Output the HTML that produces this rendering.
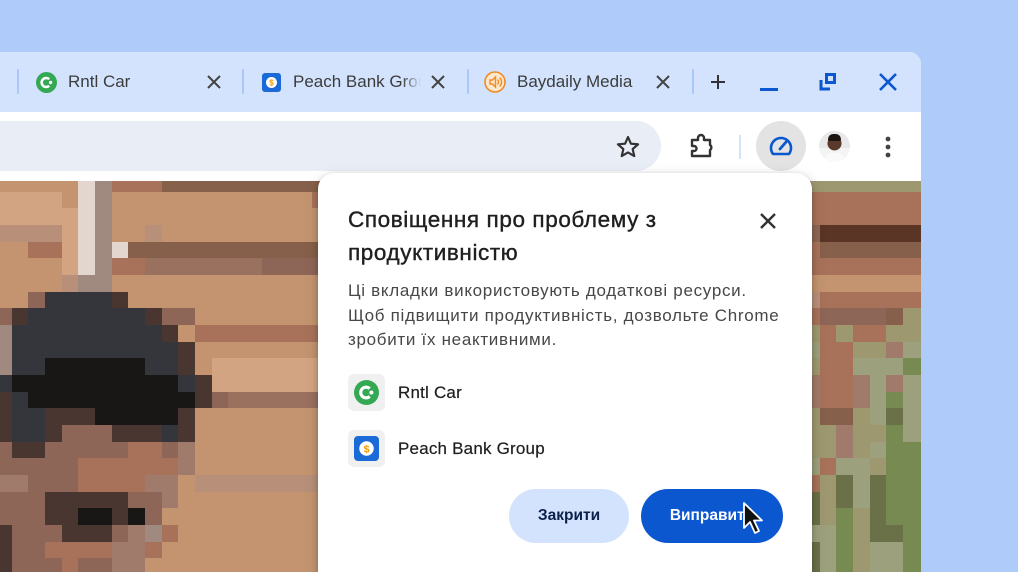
<!DOCTYPE html>
<html><head><meta charset="utf-8"><style>
*{margin:0;padding:0;box-sizing:border-box}
html,body{width:1018px;height:572px;overflow:hidden}
body{background:#afcbf9;font-family:"Liberation Sans","DejaVu Sans",sans-serif;position:relative}
.win{position:absolute;left:0;top:52px;width:921px;height:520px;background:#fff;border-top-right-radius:12px;overflow:hidden}
.strip{position:absolute;left:0;top:0;width:921px;height:60px;background:#d3e3fd}
.sep{position:absolute;top:17px;width:2px;height:25px;background:#a8c7fa;border-radius:1px}
.tab{position:absolute;top:20px;font-size:17px;color:#3c3c3c}
.x{position:absolute;top:21px;width:18px;height:18px}
.omni{position:absolute;left:-30px;top:69px;width:691px;height:50px;background:#e9eef6;border-radius:25px}
.content{position:absolute;left:0;top:129px;width:921px;height:391px;background:#b08a6c;overflow:hidden}
.dlg{position:absolute;left:318px;top:173px;width:494px;height:399px;background:#fff;border-radius:16px 16px 0 0;box-shadow:0 2px 6px rgba(0,0,0,.25),0 4px 16px rgba(0,0,0,.12)}
.title{position:absolute;left:30px;top:30px;font-size:22.5px;line-height:33px;color:#1f1f1f;width:400px;letter-spacing:0.6px;-webkit-text-stroke:0.4px #1f1f1f}
.body{position:absolute;left:30px;top:106px;font-size:17px;line-height:24.5px;color:#474747;width:460px;white-space:nowrap;letter-spacing:0.7px}
.ibox{position:absolute;left:30px;width:37px;height:37px;background:#f0f0f0;border-radius:6px}
.itxt{position:absolute;left:80px;font-size:17px;color:#1f1f1f;letter-spacing:0.2px;-webkit-text-stroke:0.2px #1f1f1f}
.btn{position:absolute;top:316px;height:54px;border-radius:27px;font-size:15.5px;font-weight:bold;text-align:center;line-height:54px}
</style></head><body>
<div class="win">
  <div class="strip">
    <div class="sep" style="left:17px"></div>
    <div class="sep" style="left:242px"></div>
    <div class="sep" style="left:467px"></div>
    <div class="sep" style="left:692px"></div>
    <svg style="position:absolute;left:36px;top:20px" width="21" height="21" viewBox="0 0 21 21"><circle cx="10.5" cy="10.5" r="10.5" fill="#34a853"/><path d="M13.2 7.2A4.5 4.5 0 1 0 13.2 13.8" stroke="#fff" stroke-width="2.6" fill="none"/><circle cx="14.6" cy="10.5" r="1.7" fill="#fff"/></svg>
    <div class="tab" style="left:68px">Rntl Car</div>
    <svg class="x" style="left:205px" viewBox="0 0 18 18"><path d="M3 3L15 15M15 3L3 15" stroke="#444" stroke-width="2"/></svg>
    <svg style="position:absolute;left:262px;top:21px" width="19" height="19" viewBox="0 0 19 19"><rect width="19" height="19" rx="3" fill="#1a6ad8"/><circle cx="9.5" cy="9.5" r="5.5" fill="#fff"/><text x="9.5" y="12.5" font-size="8" font-weight="bold" fill="#f29900" text-anchor="middle" font-family="Liberation Sans">$</text></svg>
    <div class="tab" style="left:293px;width:128px;overflow:hidden;white-space:nowrap;-webkit-mask-image:linear-gradient(90deg,#000 85%,transparent)">Peach Bank Group</div>
    <svg class="x" style="left:429px" viewBox="0 0 18 18"><path d="M3 3L15 15M15 3L3 15" stroke="#444" stroke-width="2"/></svg>
    <svg style="position:absolute;left:484px;top:19px" width="22" height="22" viewBox="0 0 22 22"><circle cx="11" cy="11" r="10" fill="#fde8cc" stroke="#f08a24" stroke-width="1.6"/><path d="M6 9h2.5l3-3v10l-3-3H6z" fill="none" stroke="#f08a24" stroke-width="1.4"/><path d="M13.5 8.5a3.5 3.5 0 0 1 0 5M15.5 6.5a6 6 0 0 1 0 9" stroke="#f08a24" stroke-width="1.4" fill="none"/></svg>
    <div class="tab" style="left:517px">Baydaily Media</div>
    <svg class="x" style="left:654px" viewBox="0 0 18 18"><path d="M3 3L15 15M15 3L3 15" stroke="#444" stroke-width="2"/></svg>
    <svg style="position:absolute;left:709px;top:21px" width="18" height="18" viewBox="0 0 18 18"><path d="M9 2V16M2 9H16" stroke="#333" stroke-width="2"/></svg>
    <div style="position:absolute;left:760px;top:36px;width:18px;height:3px;background:#0b57d0"></div>
    <svg style="position:absolute;left:819px;top:21px" width="18" height="18" viewBox="0 0 18 18"><path d="M2 7V16H11" stroke="#0b57d0" stroke-width="3" fill="none"/><rect x="7.5" y="1.5" width="8" height="8" fill="none" stroke="#0b57d0" stroke-width="3"/></svg>
    <svg style="position:absolute;left:878px;top:20px" width="20" height="20" viewBox="0 0 20 20"><path d="M2 2L18 18M18 2L2 18" stroke="#0b57d0" stroke-width="2.6"/></svg>
  </div>
  <div class="omni"></div>
  <svg style="position:absolute;left:615px;top:82px" width="26" height="26" viewBox="0 0 24 24"><path d="M12 2.8l2.7 6.1 6.6.6-5 4.4 1.5 6.5L12 17l-5.8 3.4 1.5-6.5-5-4.4 6.6-.6z" fill="none" stroke="#333" stroke-width="2" stroke-linejoin="round"/></svg>
  <svg style="position:absolute;left:688px;top:81px" width="28" height="28" viewBox="0 0 28 28"><path d="M4 7H10V5A3 3 0 0 1 16 5V7H22V12A3 3 0 0 1 22 17V23H4V18H6A2.5 2.5 0 0 0 6 13H4z" fill="none" stroke="#333" stroke-width="2.4" stroke-linejoin="round"/></svg>
  <div style="position:absolute;left:739px;top:83px;width:2px;height:24px;background:#d3e3fd"></div>
  <div style="position:absolute;left:756px;top:69px;width:50px;height:50px;border-radius:25px;background:#e3e3e3"></div>
  <svg style="position:absolute;left:768px;top:83px" width="26" height="22" viewBox="0 0 26 22"><path d="M5 19A10 10 0 1 1 21 19Z" fill="none" stroke="#0b57d0" stroke-width="2.6" stroke-linejoin="round"/><path d="M12 14L18 7" stroke="#0b57d0" stroke-width="2.8" stroke-linecap="round"/></svg>
  <div style="position:absolute;left:819px;top:79px;width:31px;height:31px;border-radius:50%;background:radial-gradient(circle at 50% 40%,#5a3a2a 0 28%,transparent 30%),linear-gradient(#e8e8e8 0 55%,#f4f4f4 55%);overflow:hidden"><div style="position:absolute;left:9px;top:3px;width:13px;height:7px;border-radius:6px 6px 2px 2px;background:#1c1410"></div><div style="position:absolute;left:5px;top:22px;width:21px;height:12px;border-radius:8px 8px 0 0;background:#fafafa"></div></div>
  <svg style="position:absolute;left:883px;top:82px" width="10" height="26" viewBox="0 0 10 26"><circle cx="5" cy="5" r="2.4" fill="#444"/><circle cx="5" cy="13" r="2.4" fill="#444"/><circle cx="5" cy="21" r="2.4" fill="#444"/></svg>
  <div class="content" id="c"></div>
</div>
<div class="dlg">
  <div class="title">Сповіщення про проблему з<br>продуктивністю</div>
  <svg style="position:absolute;left:441px;top:39px" width="18" height="18" viewBox="0 0 18 18"><path d="M2 2L16 16M16 2L2 16" stroke="#333" stroke-width="2.4"/></svg>
  <div class="body">Ці вкладки використовують додаткові ресурси.<br>Щоб підвищити продуктивність, дозвольте Chrome<br>зробити їх неактивними.</div>
  <div class="ibox" style="top:201px"><svg style="position:absolute;left:6px;top:6px" width="25" height="25" viewBox="0 0 21 21"><circle cx="10.5" cy="10.5" r="10.5" fill="#34a853"/><path d="M13.2 7.2A4.5 4.5 0 1 0 13.2 13.8" stroke="#fff" stroke-width="2.6" fill="none"/><circle cx="14.6" cy="10.5" r="1.7" fill="#fff"/></svg></div>
  <div class="itxt" style="top:210px">Rntl Car</div>
  <div class="ibox" style="top:257px"><svg style="position:absolute;left:6px;top:6px" width="25" height="25" viewBox="0 0 19 19"><rect width="19" height="19" rx="3" fill="#1a6ad8"/><circle cx="9.5" cy="9.5" r="5.5" fill="#fff"/><text x="9.5" y="12.5" font-size="8" font-weight="bold" fill="#f29900" text-anchor="middle" font-family="Liberation Sans">$</text></svg></div>
  <div class="itxt" style="top:266px">Peach Bank Group</div>
  <div class="btn" style="left:191px;width:120px;background:#d3e3fd;color:#0a1f4a">Закрити</div>
  <div class="btn" style="left:323px;width:142px;background:#0b57d0;color:#fff">Виправити</div>
  <svg style="position:absolute;left:424px;top:328px" width="24" height="36" viewBox="0 0 24 36"><path d="M2 2V27L8 21L13 32L17 30L12 19.5H20Z" fill="#111" stroke="#fff" stroke-width="1.8" stroke-linejoin="round"/></svg>
</div>
<script>
var P={T:'#c3946f',L:'#d3a482',W:'#e2d6ce',G:'#a08a80',B:'#86604a',R:'#a8725a',M:'#9a705e',D:'#35363c',K:'#181716',N:'#4a3630',p:'#8e6658',Q:'#a07a6a',S:'#b8907a',O:'#9e9870',V:'#768a52',X:'#6a7048',Y:'#9ca07c',E:'#5a3424'};
var L=["TTTTTWGRRRBBBBBBBBBB","LLLLTWGTTTTTTTTTTTTR","LLLLLWGTTTTTTTTTTTTT","SSSSLWGTTSTTTTTTTTTT","TTRRLWGWBBBBBBBBBBBB","TTTTLWGRRMMMMMMMpppp","TTTTSGGTTTTTTTTTTTTT","TTpDDDDNTTTTTTTTTTTT","pNDDDDDDDNppTTTTTTTT","GDDDDDDDDDNTRRRRRRRR","GDDDDDDDDDDNTTTTTTTT","GDDKKKKKKDDNTLLLLLLL","DKKKKKKKKKKDNLLLLLLL","NDKKKKKKKKKKNpMMMMMM","NDDNNNKKKKKNTTTTTTTT","NDDNpppNNNDNTTTTTTTT","pNNpppppRRpQTTTTTTTT","pppppRRRRRRQTTTTTTTT","QQpppRRRRQQTSSSSSSSS","pppNNNNNppQTTTTTTTTT","pppNNKKNKpTTTTTTTTTT","NpppNNNpQGRTTTTTTTTT","NppRRRRQQRTTTTTTTTTT","NpppRppQQTTTTTTTTTTT","NpppRppQQTTTTTTTTTTT"];
var Rr=["OOOOOOO","RRRRRRR","RRRRRRR","pEEEEEE","RBBBBBB","RRRRRRR","TTTTTTT","SRRRRRR","RppppBO","ORORROO","YRROOQY","ORRYYYV","QRRQYQY","QRRQYVY","OBBOYXY","OOQOOVY","OOQOYVV","YRYYOVV","ROXYXVV","XOXYXVV","XOVOXVV","YYVOXXV","XYVOYYV","XYVOYYV"];
var c=document.getElementById('c'),h='',s=16.67;
for(var r=0;r<L.length;r++)for(var i=0;i<L[r].length;i++){h+='<div style="position:absolute;left:'+(-5+i*s)+'px;top:'+(r*s-6)+'px;width:17.5px;height:17.5px;background:'+(P[L[r][i]]||'#c3946f')+'"></div>';}
for(var r=0;r<Rr.length;r++)for(var i=0;i<Rr[r].length;i++){h+='<div style="position:absolute;left:'+(803+i*s)+'px;top:'+(r*s-6)+'px;width:17.5px;height:17.5px;background:'+(P[Rr[r][i]]||'#9e9870')+'"></div>';}
c.innerHTML=h;
</script>
</body></html>
